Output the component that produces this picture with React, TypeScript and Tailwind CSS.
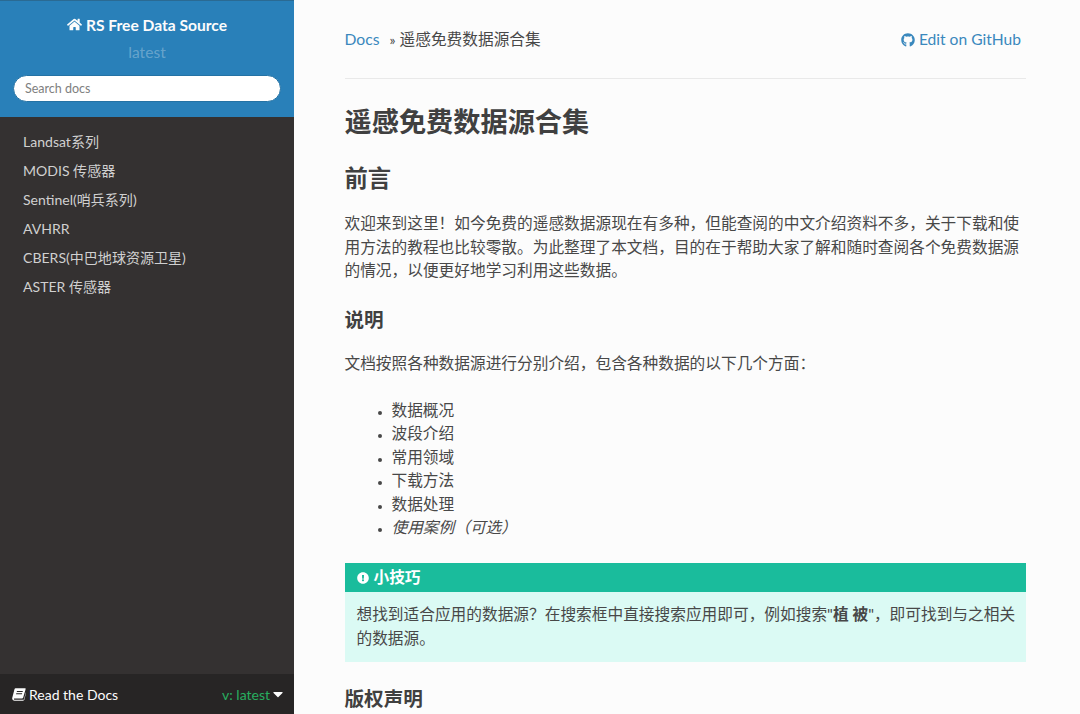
import React from "react";
import { FaHome, FaGithub, FaCaretDown, FaExclamationCircle } from "react-icons/fa";

const navItems = [
  "Landsat系列",
  "MODIS 传感器",
  "Sentinel(哨兵系列)",
  "AVHRR",
  "CBERS(中巴地球资源卫星)",
  "ASTER 传感器",
];

const listItems = ["数据概况", "波段介绍", "常用领域", "下载方法", "数据处理"];

// slanted book, the old font-awesome one
const BookIcon = () => (
  <svg viewBox="0 0 14 13" className="w-[14px] h-[13px]" fill="currentColor">
    <path d="M3.6 0.3 H13 C13.5 0.3 13.8 0.7 13.6 1.2 L11.2 9.6 C11 10.2 10.6 10.5 10 10.5 H2.6 C2 10.5 1.7 11 2 11.4 C2.2 11.7 2.5 11.8 2.9 11.8 H11.2 C11.6 11.8 11.9 11.5 12 11.2 L13.9 4.2 L14 5 L12.4 11.6 C12.2 12.3 11.7 12.8 11 12.8 H2.6 C1.4 12.8 0.4 11.9 0.2 10.8 C0.1 10.3 0.2 9.8 0.4 9.2 L2.4 1.4 C2.6 0.7 3 0.3 3.6 0.3 Z M5 3 L4.7 4 H10.6 L10.9 3 Z M4.3 5.2 L4 6.2 H9.9 L10.2 5.2 Z" fillRule="evenodd" />
  </svg>
);

const Sidebar = () => {
  return (
    <aside className="w-[294px] shrink-0 h-full flex flex-col bg-[#343131]">
      <div className="h-[117px] bg-[#2980b9] border-t border-[#2a6a93] flex flex-col items-center">
        <div className="mt-[13.5px] h-[20px] flex items-center gap-[4px] text-[#fcfcfc] text-[15.6px] font-bold leading-[20px]">
          <FaHome className="w-[15px] h-[15px]" />
          <span>RS Free Data Source</span>
        </div>
        <div className="mt-[7.5px] h-[20px] text-[15.6px] leading-[20px] text-[#fcfcfc]/30">latest</div>
        <div className="mt-[13px] w-[268px] h-[27px] rounded-full bg-white border border-[#2472a4] flex items-center px-[11px] pt-[2px] text-[12.5px] text-[#808080]">
          Search docs
        </div>
      </div>
      <nav className="flex-1 pt-[10px]">
        {navItems.map((item) => (
          <div key={item} className="h-[29px] pl-[23px] flex items-center text-[14.05px] text-[#d0d0d0]">
            {item}
          </div>
        ))}
      </nav>
      <div className="h-[40px] bg-[#272525] flex items-center justify-between pl-[12px] pr-[11px] text-[14px]">
        <div className="flex items-center gap-[3px] text-[#fcfcfc]">
          <BookIcon />
          <span>Read the Docs</span>
        </div>
        <div className="flex items-center gap-[3px] text-[#27ae60]">
          <span>v: latest</span>
          <FaCaretDown className="w-[10px] h-[16px] text-[#fcfcfc]" />
        </div>
      </div>
    </aside>
  );
};

const Content = () => {
  return (
    <main className="flex-1 min-w-0 h-full overflow-hidden bg-[#fcfcfc] pl-[50.5px] pr-[54px] text-[15.7px] leading-[23.5px] text-[#484848]">
      <div className="h-[79px] border-b border-[#e9e9e9] pt-[28px] flex items-start justify-between">
        <div className="flex items-center h-[23px]">
          <span className="text-[#3a88bd]">Docs</span>
          <span className="ml-[10px] mr-[4px] text-[14px]">»</span>
          <span>遥感免费数据源合集</span>
        </div>
        <div className="flex items-center h-[23px] gap-[4px] pr-[5px] text-[15.6px] text-[#3a88bd]">
          <FaGithub className="w-[14px] h-[14px]" />
          <span>Edit on GitHub</span>
        </div>
      </div>
      <h1 className="mt-[24px] text-[27.2px] leading-[38px] font-bold text-[#404040]">遥感免费数据源合集</h1>
      <h2 className="mt-[21px] text-[23.3px] leading-[32px] font-bold text-[#404040]">前言</h2>
      <p className="mt-[18px]">
        欢迎来到这里！如今免费的遥感数据源现在有多种，但能查阅的中文介绍资料不多，关于下载和使用方法的教程也比较零散。为此整理了本文档，目的在于帮助大家了解和随时查阅各个免费数据源的情况，以便更好地学习利用这些数据。
      </p>
      <h3 className="mt-[23px] text-[19.6px] leading-[28px] font-bold text-[#404040]">说明</h3>
      <p className="mt-[18px]">文档按照各种数据源进行分别介绍，包含各种数据的以下几个方面：</p>
      <ul className="mt-[23.5px] pl-[47px] list-disc marker:text-[11px]">
        {listItems.map((item) => (
          <li key={item}>{item}</li>
        ))}
        <li className="italic">使用案例（可选）</li>
      </ul>
      <div className="mt-[23.5px] bg-[#dbfaf4]">
        <div className="h-[29px] bg-[#1abc9c] px-[12px] flex items-center gap-[5px] text-white font-bold">
          <FaExclamationCircle className="w-[12px] h-[12px]" />
          <span>小技巧</span>
        </div>
        <p className="pl-[12px] pr-[6px] pt-[11px] pb-[12px]">
          想找到适合应用的数据源？在搜索框中直接搜索应用即可，例如搜索"<b>植 被</b>"，即可找到与之相关的数据源。
        </p>
      </div>
      <h2 className="mt-[23px] text-[19.6px] leading-[28px] font-bold text-[#404040]">版权声明</h2>
    </main>
  );
};

export default function App() {
  return (
    <div className="flex w-[1080px] h-[714px] overflow-hidden font-['Lato','Noto_Sans_CJK_SC',sans-serif]">
      <Sidebar />
      <Content />
    </div>
  );
}
